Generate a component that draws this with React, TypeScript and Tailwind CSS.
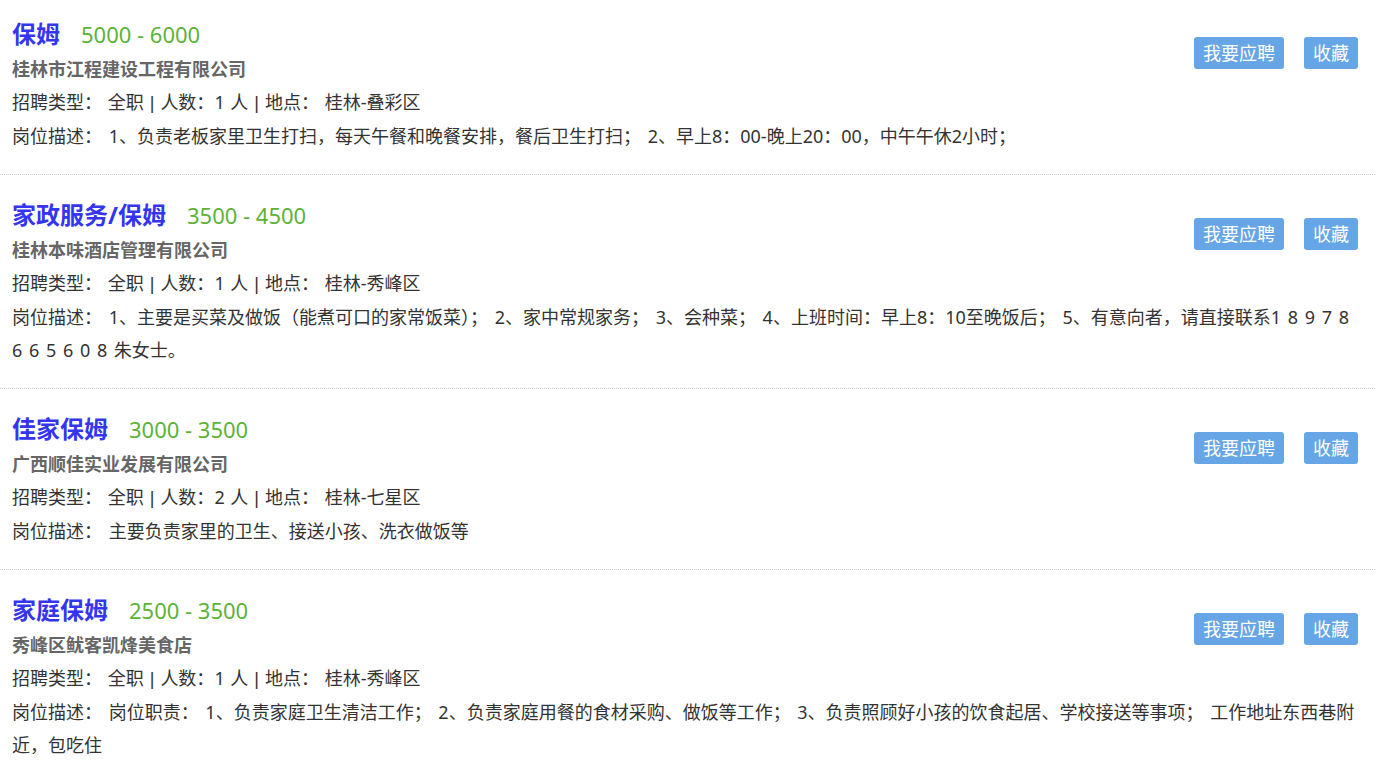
const jobs = [
  {
    title: '保姆',
    salary: '5000 - 6000',
    company: '桂林市江程建设工程有限公司',
    count: '1',
    place: '桂林-叠彩区',
    desc: '1、负责老板家里卫生打扫，每天午餐和晚餐安排，餐后卫生打扫； 2、早上8：00-晚上20：00，中午午休2小时；',
  },
  {
    title: '家政服务/保姆',
    salary: '3500 - 4500',
    company: '桂林本味酒店管理有限公司',
    count: '1',
    place: '桂林-秀峰区',
    desc: '1、主要是买菜及做饭（能煮可口的家常饭菜）； 2、家中常规家务； 3、会种菜； 4、上班时间：早上8：10至晚饭后； 5、有意向者，请直接联系1 8 9 7 8 6 6 5 6 0 8 朱女士。',
  },
  {
    title: '佳家保姆',
    salary: '3000 - 3500',
    company: '广西顺佳实业发展有限公司',
    count: '2',
    place: '桂林-七星区',
    desc: '主要负责家里的卫生、接送小孩、洗衣做饭等',
  },
  {
    title: '家庭保姆',
    salary: '2500 - 3500',
    company: '秀峰区鱿客凯烽美食店',
    count: '1',
    place: '桂林-秀峰区',
    desc: '岗位职责： 1、负责家庭卫生清洁工作； 2、负责家庭用餐的食材采购、做饭等工作； 3、负责照顾好小孩的饮食起居、学校接送等事项； 工作地址东西巷附近，包吃住',
  },
]

// narrow pipe like the original page's font
const Pipe = () => <span className="font-['Liberation_Sans']"> | </span>

export default function App() {
  return (
    <div
      className="w-[1375px] bg-white text-[#333] overflow-hidden"
      style={{ fontFamily: '"Noto Sans", "Noto Sans CJK SC", sans-serif' }}
    >
      <div className="-mt-[6px]">
        {jobs.map((job, index) => (
          <div key={index} className="relative px-[12px] pt-[23px] pb-[21px] border-b border-dotted border-[#ccc]">
            <div className="absolute right-[17px] top-[43px] flex gap-[20px]">
              <button className="h-[32px] px-[9px] rounded-[3px] bg-[#66a6e6] text-white text-[18px] leading-[32px]">我要应聘</button>
              <button className="h-[32px] px-[9px] rounded-[3px] bg-[#66a6e6] text-white text-[18px] leading-[32px]">收藏</button>
            </div>
            <div className="flex items-baseline h-[34px] leading-[34px] mb-[2px]">
              <span className="text-[24px] font-bold text-[#3535f0]">{job.title}</span>
              <span className="ml-[21px] text-[22px] text-[#5cb336]">{job.salary}</span>
            </div>
            <div className="text-[18px] leading-[33px] font-bold text-[#666]">{job.company}</div>
            <div className="text-[18px] leading-[33px] [word-spacing:1px]">
              招聘类型： 全职<Pipe />人数：{job.count} 人<Pipe />地点： {job.place}
            </div>
            <div className="text-[18px] leading-[33px] [word-spacing:2px]">岗位描述： {job.desc}</div>
          </div>
        ))}
      </div>
    </div>
  )
}
